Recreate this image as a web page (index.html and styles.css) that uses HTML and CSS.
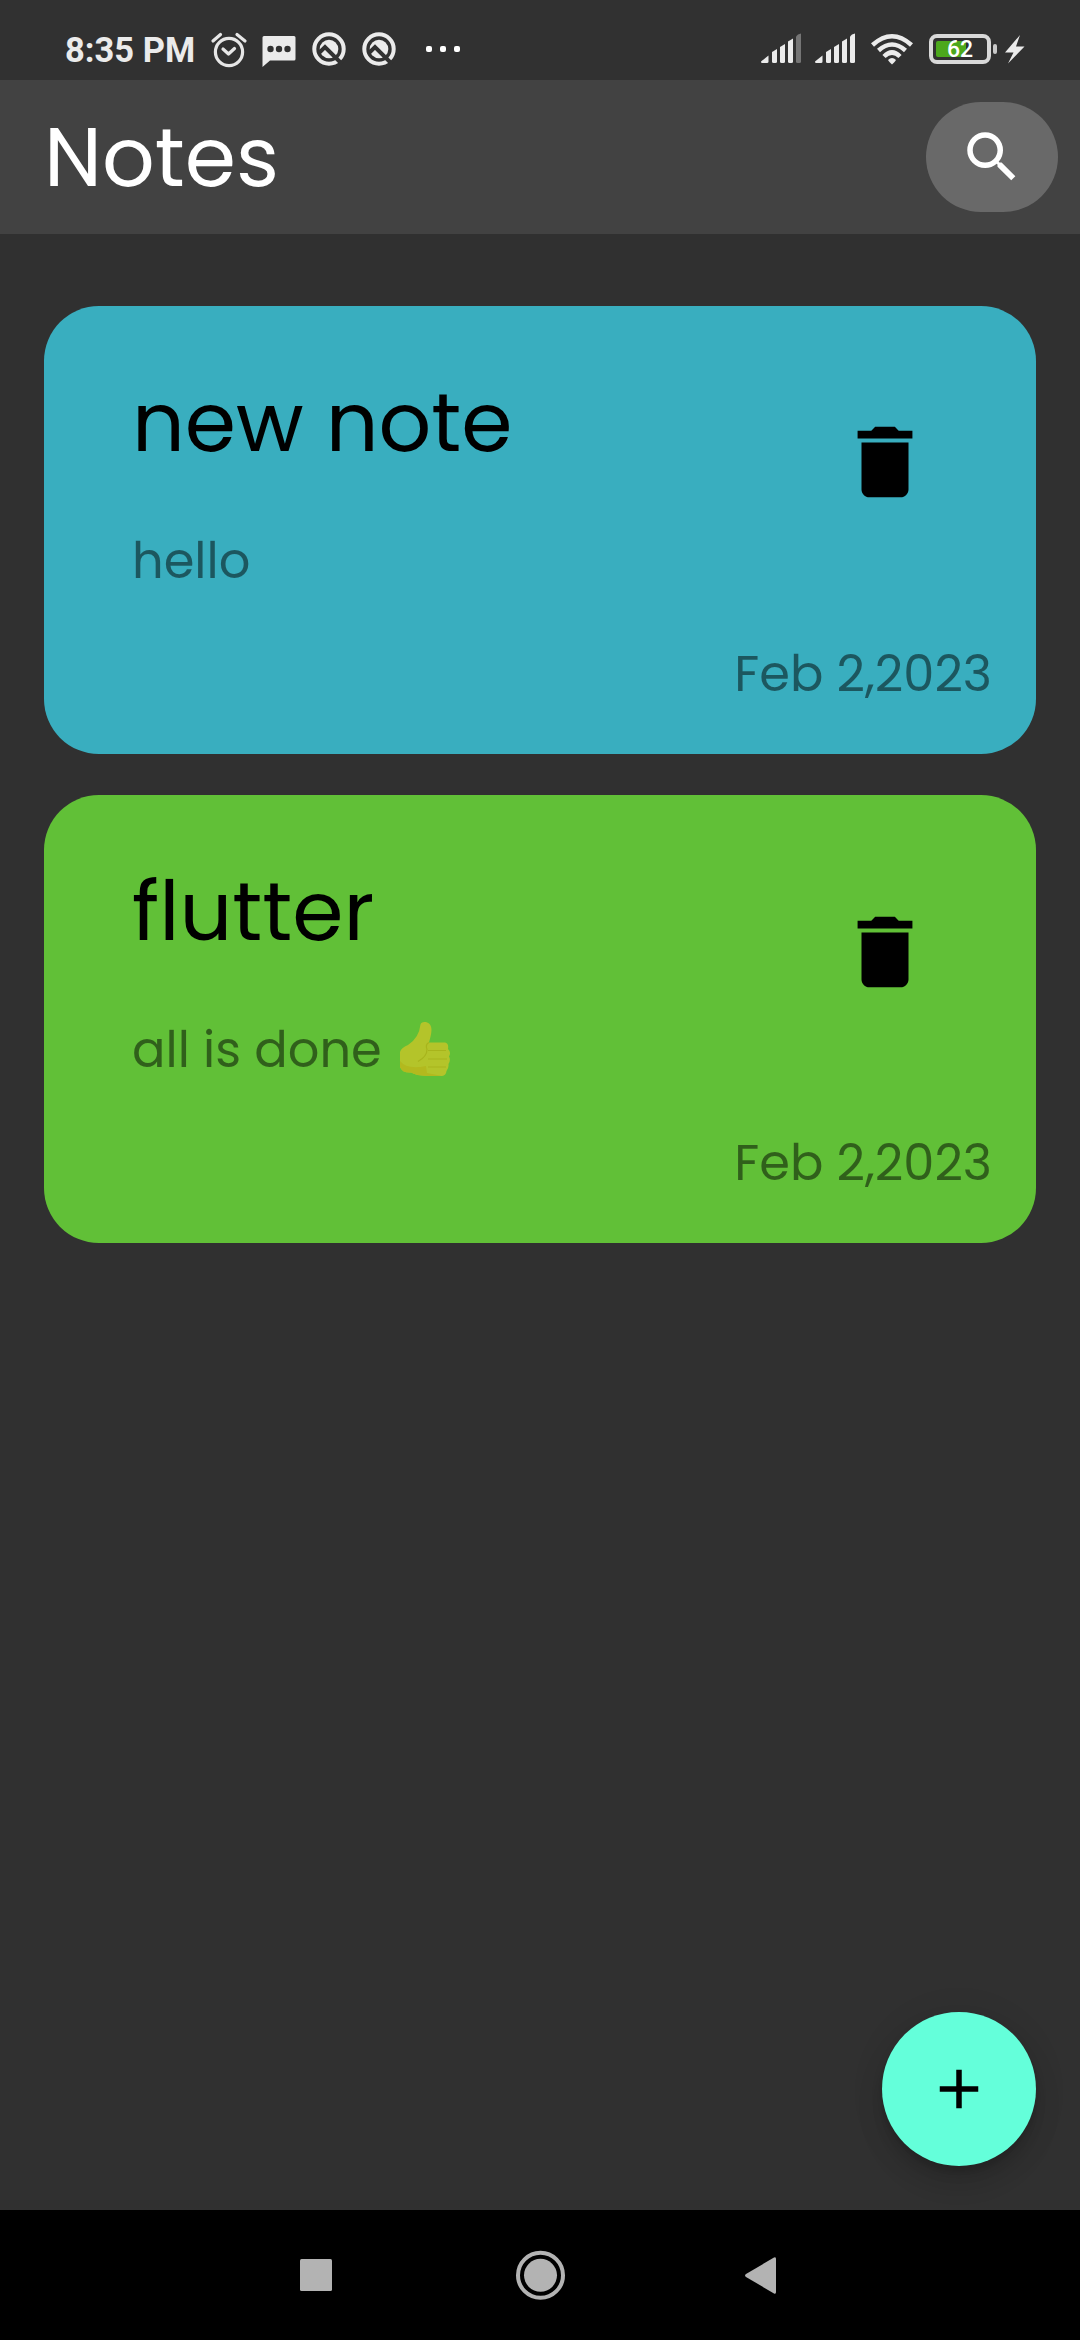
FILE: index.html
```html
<!DOCTYPE html>
<html lang="en">
<head>
<meta charset="utf-8">
<title>Notes</title>
<link rel="stylesheet" href="styles.css">
</head>
<body>
<div class="screen">
  <header class="status">
    <span class="clock">8:35 PM</span>
    <svg class="status-left" viewBox="208 0 262 80" width="262" height="80">
      <g fill="none" stroke="#e6e6e6" stroke-width="3.2">
        <circle cx="229" cy="52" r="13.6"/>
        <path d="M223 49l5.500 5 6-5.500M213 41l7.500-6.500M245 41l-8-6.500" stroke-linecap="round" stroke-linejoin="round"/>
      </g>
      <path d="M264 36h30a1.500 1.500 0 0 1 1.500 1.500V59a1.500 1.500 0 0 1-1.500 1.500H270L262.500 67V37.500A1.500 1.500 0 0 1 264 36z" fill="#ebebeb"/>
      <g fill="#313131"><circle cx="270.500" cy="49" r="3.200"/><circle cx="279" cy="49" r="3.200"/><circle cx="287.500" cy="49" r="3.200"/></g>
      <g id="q">
        <circle cx="329" cy="49" r="14.700" fill="none" stroke="#ebebeb" stroke-width="4"/>
        <circle cx="329" cy="49" r="9.300" fill="#ebebeb"/>
        <path d="M319 53l6-6 17 17" fill="none" stroke="#313131" stroke-width="4"/>
      </g>
      <use href="#q" x="50"/>
      <g fill="#fff"><rect x="426" y="46" width="6" height="6" rx="2"/><rect x="440" y="46" width="6" height="6" rx="2"/><rect x="454" y="46" width="6" height="6" rx="2"/></g>
    </svg>
    <div class="status-right">
      <svg viewBox="760 0 154 80" width="154" height="80" fill="#ebebeb">
        <g id="bars">
          <path d="M761 61.500l7.500-6v6q0 1.500-1.500 1.500h-5q-1 0-1-1.500z"/>
          <path d="M772 52l5-3v12.500q0 1.500-1.500 1.500h-2q-1.500 0-1.500-1.500z"/>
          <path d="M780 47l5-3v17.500q0 1.500-1.500 1.500h-2q-1.500 0-1.500-1.500z"/>
          <path d="M788 41.500l5-3v23q0 1.500-1.500 1.500h-2q-1.500 0-1.500-1.500z"/>
        </g>
        <path fill="#757575" d="M796 36.500l2-2 3-1v28q0 1.500-1.500 1.500h-2q-1.500 0-1.500-1.500z"/>
        <use href="#bars" x="54"/>
        <path d="M850 36.500l2-2 3-1v28q0 1.500-1.500 1.500h-2q-1.500 0-1.500-1.500z"/>
        <g fill="none" stroke="#ebebeb" stroke-width="4.500">
          <path d="M872.500 45q19.500-17.500 39 0M878.500 50.500q13.500-12 27 0M884 56.500q8-8 16 0"/>
        </g>
        <path d="M888 60q4-4 8 0q-1 2-4 4.500q-3-2.500-4-4.500z"/>
      </svg>
      <div class="battery"><span class="level">62</span></div>
      <i class="cap"></i>
      <svg viewBox="1004 0 22 80" width="22" height="80" fill="#ebebeb"><path d="M1020 35l-15 17.500h8.500L1008 63.500l16.500-17h-8.500z"/></svg>
    </div>
  </header>
  <div class="appbar">
    <h1>Notes</h1>
    <button class="search"><svg viewBox="0 0 24 24" width="66" height="66"><path d="M15.500 14h-.79l-.28-.27A6.471 6.471 0 0 0 16 9.500 6.500 6.500 0 1 0 9.500 16c1.610 0 3.090-.59 4.230-1.570l.27.28v.79l5 4.990L20.490 19l-4.990-5zm-6 0C7.010 14 5 11.990 5 9.500S7.010 5 9.500 5 14 7.010 14 9.500 11.990 14 9.500 14z"/></svg></button>
  </div>
  <main>
    <article class="card blue">
      <div class="top">
        <div class="text"><h2>new note</h2><p>hello</p></div>
        <svg class="trash" viewBox="0 0 24 24"><path d="M6 19c0 1.100.9 2 2 2h8c1.100 0 2-.9 2-2V7H6v12zM19 4h-3.500l-1-1h-5l-1 1H5v2h14V4z"/></svg>
      </div>
      <time>Feb 2,2023</time>
    </article>
    <article class="card green">
      <div class="top">
        <div class="text"><h2>flutter</h2><p>all is done <svg class="thumb" viewBox="0 0 52 56" width="52" height="56">
          <path d="M21.500 3.500C22 1 26 0 30 2.500C34 6 32.500 13 30 21.500H46Q50 22.500 49 28Q52.500 31 50 35.500Q52 39 49.500 43Q50 47 47.500 50Q47 54.500 43 55H28Q17 54.500 12 51.500Q3 52 1 46L1 31Q2 27 9 24Q20 17 21.500 3.500z" fill="#b4c42a"/>
          <path d="M1 40Q8 49 27 45L28 52L43 55H28Q17 54.500 12 51.500Q3 52 1 46z" fill="#b3b91e"/>
          <path d="M29 29.500h18M29 38h19M29 46h18M30 21.500q-4 2-2 7q0 7-9 12" fill="none" stroke="#a8b41c" stroke-width="1.200"/>
        </svg></p></div>
        <svg class="trash" viewBox="0 0 24 24"><path d="M6 19c0 1.100.9 2 2 2h8c1.100 0 2-.9 2-2V7H6v12zM19 4h-3.500l-1-1h-5l-1 1H5v2h14V4z"/></svg>
      </div>
      <time>Feb 2,2023</time>
    </article>
    <button class="fab"><svg viewBox="0 0 24 24" width="66" height="66"><path d="M19 13h-6v6h-2v-6H5v-2h6V5h2v6h6v2z"/></svg></button>
  </main>
  <nav>
    <svg viewBox="0 0 1080 130" width="1080" height="130" fill="#b3b3b3">
      <rect x="300" y="49" width="32" height="32" rx="1.500"/>
      <circle cx="540.500" cy="65.300" r="16.500"/>
      <circle cx="540.500" cy="65.300" r="22.500" fill="none" stroke="#b3b3b3" stroke-width="4"/>
      <path d="M746 64L774 47.500Q776 46.500 776 49V82Q776 84.500 774 83.500L746 67Q744 65.500 746 64z"/>
    </svg>
  </nav>
</div>
</body>
</html>
```
FILE: styles.css
```css
* { box-sizing: border-box; }
body { margin: 0; }
h1, h2, p { margin: 0; font-weight: 400; white-space: nowrap; }
button { border: 0; padding: 0; display: flex; align-items: center; justify-content: center; }
svg { display: block; flex: none; }

.screen {
  width: 1080px;
  height: 2340px;
  display: flex;
  flex-direction: column;
  background: #303030;
  font-family: Poppins, Inter, sans-serif;
}

.status {
  height: 80px;
  display: flex;
  justify-content: space-between;
  background: #313131;
  padding: 0 54px 0 65px;
}
.clock {
  width: 143px;
  font: 700 34.5px/100px Roboto, sans-serif;
  color: #ebebeb;
  white-space: nowrap;
}
.status-left { margin-right: auto; }
.status-right { display: flex; align-items: flex-start; }
.battery {
  margin: 34px 0 0 15px;
  width: 62px;
  height: 30px;
  border: 4px solid #d9d9d9;
  border-radius: 8px;
  padding: 3px;
}
.level {
  display: block;
  height: 16px;
  border-radius: 2px;
  font: 500 23px/18px Roboto, sans-serif;
  color: #fff;
  text-align: center;
  background: linear-gradient(90deg, #4ca81c 30px, transparent 30px);
}
.cap { width: 4px; height: 10px; margin: 44px 7px 0 2px; border-radius: 2px; background: #c9c9c9; }

.appbar {
  height: 154px;
  display: flex;
  align-items: center;
  justify-content: space-between;
  padding: 0 22px 0 44px;
  background: #424242;
  color: #fff;
}
h1 { font-size: 82.5px; line-height: 154px; }
.search { width: 132px; height: 110px; border-radius: 55px; background: #696969; }
.search svg { fill: #fff; }

main {
  flex: 1;
  display: flex;
  flex-direction: column;
  gap: 41.5px;
  padding: 71.5px 44px 44px;
}
.card { height: 448px; border-radius: 55px; padding: 55px 44px 0 88px; display: flex; flex-direction: column; }
.blue { background: #39aebf; }
.green { background: #61c037; }
.top { height: 258px; display: flex; justify-content: space-between; }
h2 { font-size: 82.5px; line-height: 123px; color: #000; }
p { display: flex; margin-top: 40px; font-size: 49.5px; line-height: 73px; color: rgba(0,0,0,.5); }
.trash { width: 94px; height: 94px; margin: 54.5px 60px 0 0; }
.thumb { margin: 8px 0 0 17.5px; }
time { align-self: flex-end; font-size: 49.5px; line-height: 74px; margin-top: 18px; color: rgba(0,0,0,.5); }
.fab {
  width: 154px;
  height: 154px;
  margin: auto 0 0 auto;
  border-radius: 50%;
  background: #64ffda;
  box-shadow: 0 8px 14px -3px rgba(0,0,0,.2), 0 16px 28px rgba(0,0,0,.1), 0 3px 40px rgba(0,0,0,.06);
}
nav { height: 130px; background: #000; }
```
